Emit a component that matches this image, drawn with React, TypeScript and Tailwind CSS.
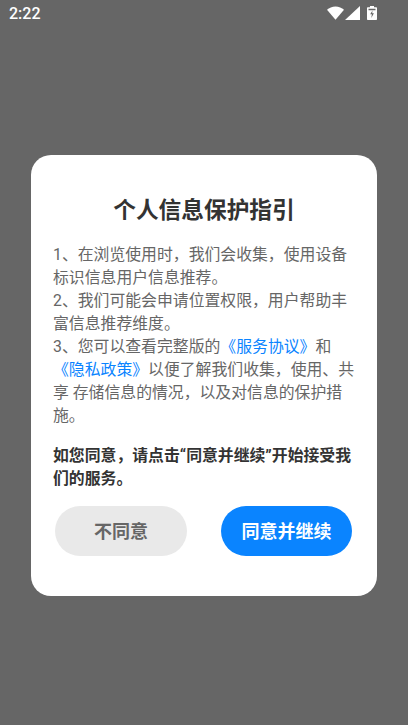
import React from "react";

const font = { cjk: "font-['Roboto','Noto_Sans_CJK_SC',sans-serif]" };

const StatusIcons = () => (
  <div className="flex items-center">
    <svg width="17" height="14" viewBox="0 0 17 14">
      <path d="M0 3.800C2.200 1.700 5.200 0.400 8.500 0.400s6.300 1.300 8.500 3.400L8.500 13.800z" fill="#fff" />
    </svg>
    <svg className="ml-[1px]" width="15" height="14" viewBox="0 0 15 14">
      <path d="M15 0V14H0z" fill="#fff" />
    </svg>
    <svg className="ml-[7px]" width="10" height="14" viewBox="0 0 10 14">
      <path
        fillRule="evenodd"
        d="M3 0h4v1.200h2c.6 0 1 .4 1 1V13c0 .6-.4 1-1 1H1c-.6 0-1-.4-1-1V2.200c0-.6.4-1 1-1h2zM1.500 2.800v1.400h7V2.800zM5.500 4.500 3.200 8.200h1.700L4.300 12 6.900 7.200H5.200z"
        fill="#fff"
      />
    </svg>
  </div>
);

export default function App() {
  return (
    <div className={`${font.cjk} flex h-[725px] w-[408px] flex-col bg-[#666666]`}>
      <div className="flex h-[26px] items-center justify-between pl-[9px] pr-[31px]">
        <span className="mt-[2px] text-[16px] font-medium text-white">2:22</span>
        <StatusIcons />
      </div>

      <div className="mt-[129px] ml-[31px] flex h-[441px] w-[346px] flex-col rounded-[20px] bg-white px-[22px]">
        <h1 className="mt-[40px] text-center text-[22.7px] leading-[32px] font-bold text-[#333333]">
          个人信息保护指引
        </h1>
        <p className="mt-[16px] text-[15.85px] leading-[23px] whitespace-nowrap text-[#666666]">
          1、在浏览使用时，我们会收集，使用设备
          <br />
          标识信息用户信息推荐。
          <br />
          2、我们可能会申请位置权限，用户帮助丰
          <br />
          富信息推荐维度。
          <br />
          3、您可以查看完整版的
          <span className="text-[#0a84ff]">《服务协议》</span>和
          <br />
          <span className="text-[#0a84ff]">《隐私政策》</span>
          以便了解我们收集，使用、共
          <br />
          享 存储信息的情况，以及对信息的保护措
          <br />
          施。
        </p>
        <p className="mt-[17px] text-[15.85px] leading-[23px] font-bold whitespace-nowrap text-[#333333]">
          如您同意，请点击“同意并继续”开始接受我
          <br />
          们的服务。
        </p>
        <div className="mt-[16px] flex justify-between pl-[2px] pr-[3px]">
          <button className="h-[50px] w-[132px] rounded-full bg-[#e9e9e9] text-[18px] font-bold text-[#666666]">
            不同意
          </button>
          <button className="h-[50px] w-[131px] rounded-full bg-[#0a84ff] text-[18px] font-bold text-white">
            同意并继续
          </button>
        </div>
      </div>
    </div>
  );
}
